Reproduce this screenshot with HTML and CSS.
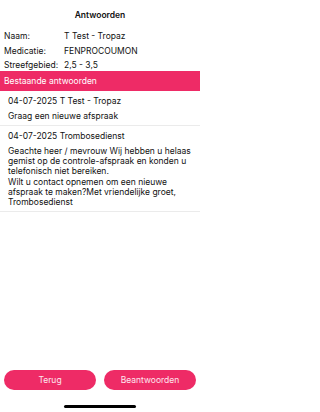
FILE: index.html
```html
<!DOCTYPE html>
<html lang="nl">
<head>
<meta charset="utf-8">
<link rel="stylesheet" href="styles.css">
</head>
<body>
<div class="screen">
  <header class="title">Antwoorden</header>
  <section class="info">
    <div class="row"><span class="label">Naam:</span><span class="value">T Test - Tropaz</span></div>
    <div class="row"><span class="label">Medicatie:</span><span class="value">FENPROCOUMON</span></div>
    <div class="row"><span class="label">Streefgebied:</span><span class="value">2,5 - 3,5</span></div>
  </section>
  <div class="bar">Bestaande antwoorden</div>
  <section class="list">
    <div class="item">
      <div class="head">04-07-2025 T Test - Tropaz</div>
      <div class="msg">Graag een nieuwe afspraak</div>
    </div>
    <div class="item">
      <div class="head">04-07-2025 Trombosedienst</div>
      <div class="msg">Geachte heer / mevrouw Wij hebben u helaas gemist op de controle-afspraak en konden u telefonisch niet bereiken.<br>Wilt u contact opnemen om een nieuwe afspraak te maken?Met vriendelijke groet, Trombosedienst</div>
    </div>
  </section>
  <div class="spacer"></div>
  <footer class="buttons">
    <button class="btn">Terug</button>
    <button class="btn">Beantwoorden</button>
  </footer>
  <div class="home"><span class="indicator"></span></div>
</div>
</body>
</html>
```
FILE: styles.css
```css
html, body {
  margin: 0;
  padding: 0;
  background: #ffffff;
}
body {
  font-family: Inter, "Liberation Sans", Arial, sans-serif;
  color: #111111;
  font-size: 8.5px;
}
.screen {
  width: 200px;
  height: 412px;
  display: flex;
  flex-direction: column;
}
.title {
  font-weight: 600;
  text-align: center;
  padding-top: 10px;
  height: 22px;
  box-sizing: border-box;
}
.info {
  padding: 7px 4px 0 4px;
  height: 49px;
  box-sizing: border-box;
}
.row {
  display: flex;
  height: 14.5px;
  align-items: center;
}
.label {
  width: 60px;
}
.bar {
  background: #ee2b66;
  color: #ffffff;
  height: 20px;
  display: flex;
  align-items: center;
  padding-left: 4px;
}
.list {
  display: flex;
  flex-direction: column;
}
.item {
  padding: 5px 8px 3px 8px;
  border-bottom: 1px solid #ebebeb;
}
.head {
  line-height: 10.3px;
  margin-bottom: 5px;
}
.msg {
  line-height: 10.3px;
}
.spacer {
  flex: 1;
}
.buttons {
  display: flex;
  gap: 8px;
  padding: 0 4px;
}
.btn {
  flex: 1;
  height: 20px;
  border: none;
  border-radius: 10px;
  background: #ee2b66;
  color: #fde6ee;
  font-family: Inter, "Liberation Sans", Arial, sans-serif;
  font-size: 8.5px;
  padding: 0;
}
.home {
  height: 22px;
  display: flex;
  justify-content: center;
  align-items: flex-start;
  padding-top: 15px;
  box-sizing: border-box;
}
.indicator {
  width: 72px;
  height: 2.5px;
  background: #000000;
  border-radius: 2px;
}
```
